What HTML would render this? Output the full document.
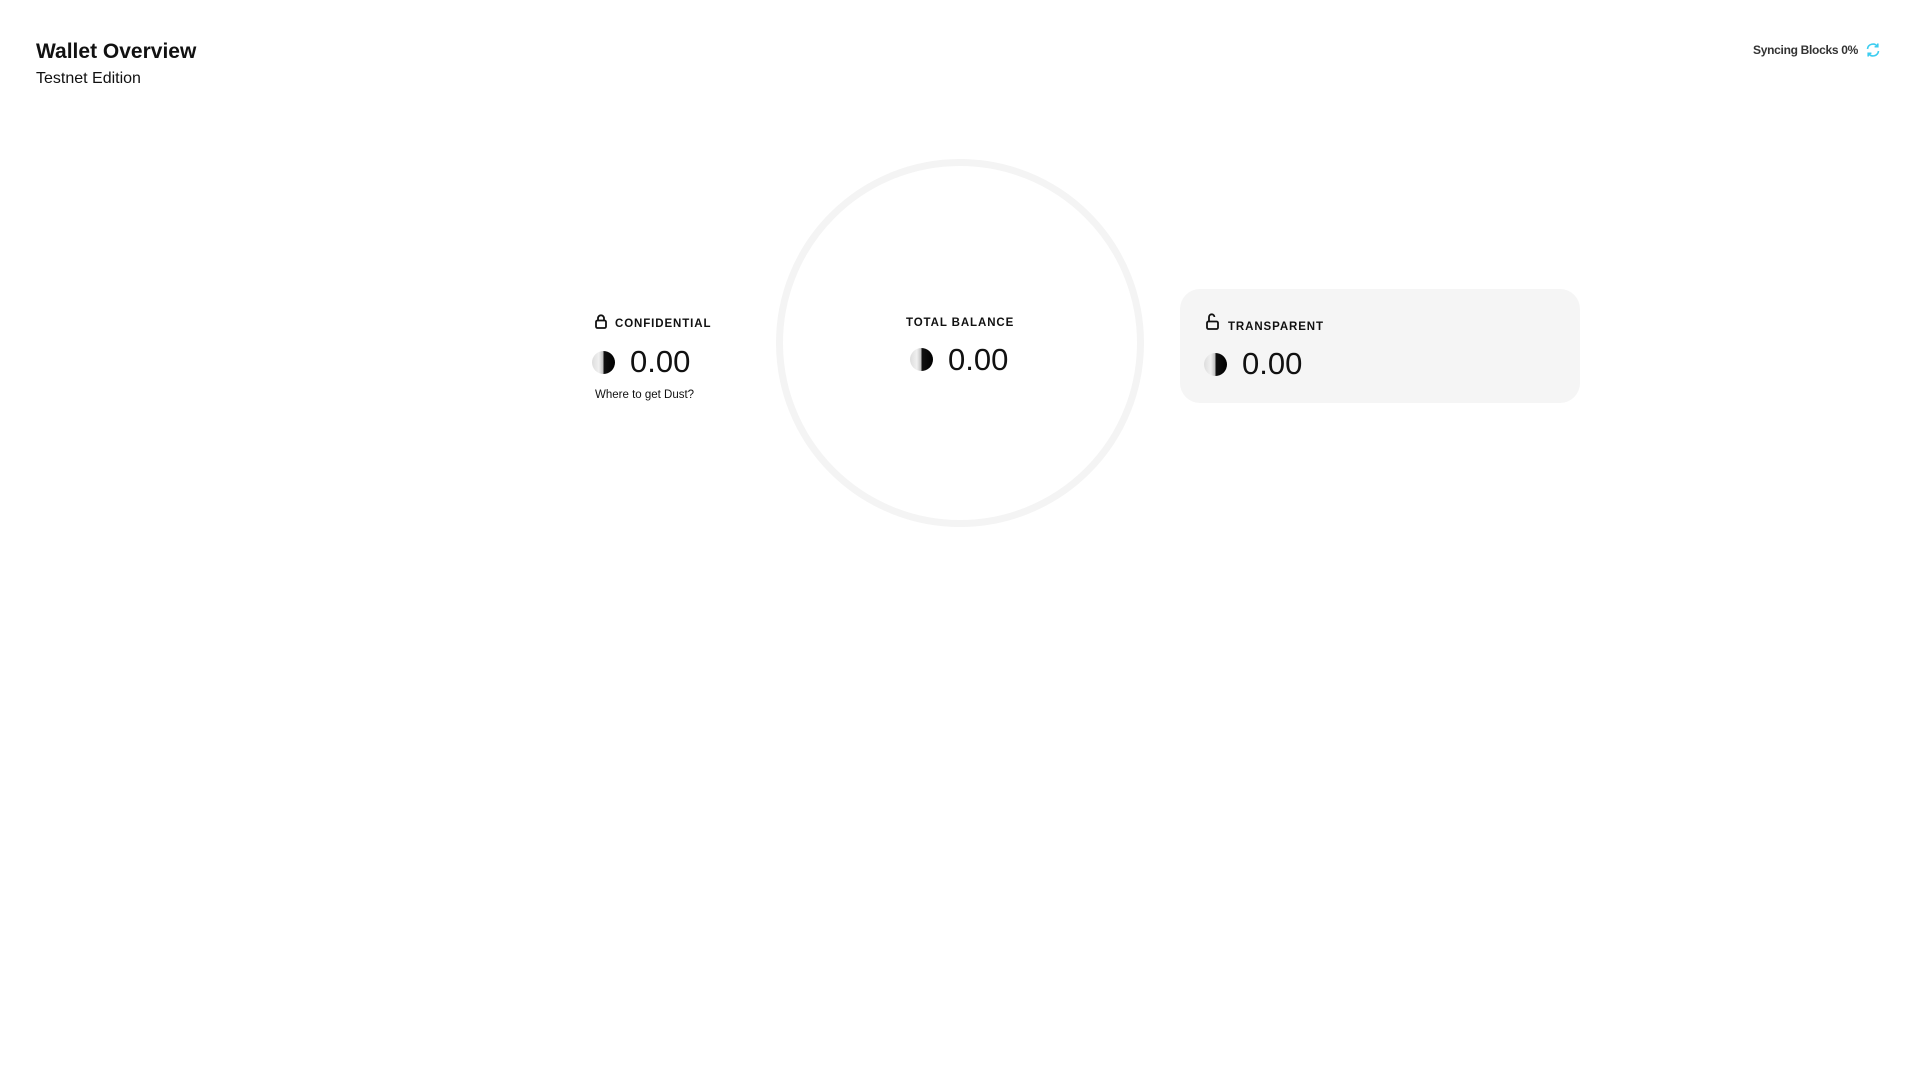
<!DOCTYPE html>
<html><head><meta charset="utf-8"><style>
*{margin:0;padding:0;box-sizing:border-box}
body{width:1920px;height:1080px;background:#fff;font-family:"Liberation Sans",sans-serif;color:#111;position:relative;overflow:hidden}
.a{position:absolute;white-space:nowrap}
.lbl{font-size:11.5px;font-weight:bold;letter-spacing:0.9px}
.num{font-size:31px;font-weight:300;letter-spacing:0}
.coin{width:23px;height:23px;border-radius:50%;background:linear-gradient(90deg,#ddd 0%,#f0f0f0 30%,#bbb 50%,#111 50%,#000 100%)}
</style></head><body>
<div class="a" style="left:36px;top:40px;font-size:21px;font-weight:bold">Wallet Overview</div>
<div class="a" style="left:36px;top:70px;font-size:16px">Testnet Edition</div>
<div class="a" style="right:62px;top:43px;font-size:12px;font-weight:bold;color:#333;letter-spacing:-0.3px">Syncing Blocks 0%</div>
<svg class="a" style="left:1865px;top:42px" width="16" height="16" viewBox="0 0 16 16" fill="none" stroke="#3ccdf0" stroke-width="1.6"><path d="M2.5 7A5.5 5.5 0 0 1 12.5 4.5"/><path d="M13.5 9A5.5 5.5 0 0 1 3.5 11.5"/><path d="M12.8 1.5v3.2H9.6"/><path d="M3.2 14.5v-3.2h3.2"/></svg>
<div class="a" style="left:776px;top:159px;width:368px;height:368px;border-radius:50%;border:7px solid #f4f4f4"></div>
<svg class="a" style="left:595px;top:314px" width="12" height="15" viewBox="0 0 12 15" fill="none" stroke="#111" stroke-width="1.8"><rect x="1" y="6.5" width="10" height="7.5" rx="1.5"/><path d="M3 6.5V4.3a3 3 0 0 1 6 0v2.2"/></svg>
<div class="a lbl" style="left:615px;top:318px">CONFIDENTIAL</div>
<div class="a coin" style="left:592px;top:351px"></div>
<div class="a num" style="left:630px;top:344px">0.00</div>
<div class="a" style="left:595px;top:389px;font-size:11.5px">Where to get Dust?</div>
<div class="a lbl" style="left:906px;top:317px">TOTAL BALANCE</div>
<div class="a coin" style="left:910px;top:348px"></div>
<div class="a num" style="left:948px;top:342px">0.00</div>
<div class="a" style="left:1180px;top:289px;width:400px;height:114px;border-radius:20px;background:#f5f5f5"></div>
<svg class="a" style="left:1206px;top:313px" width="14" height="17" viewBox="0 0 14 17" fill="none" stroke="#111" stroke-width="1.8"><rect x="1" y="8.5" width="11" height="7.5" rx="1.5"/><path d="M3 8.5V4a2.7 2.7 0 0 1 5.4 0"/></svg>
<div class="a lbl" style="left:1228px;top:321px">TRANSPARENT</div>
<div class="a coin" style="left:1204px;top:353px"></div>
<div class="a num" style="left:1242px;top:346px">0.00</div>
</body></html>
